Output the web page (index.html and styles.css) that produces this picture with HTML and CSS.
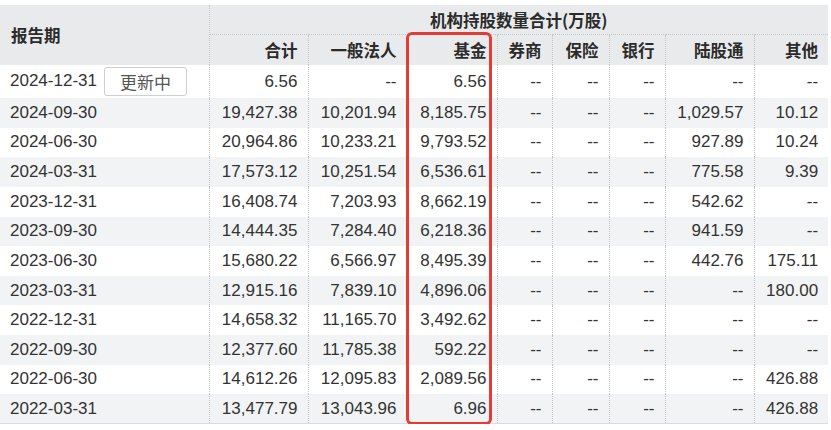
FILE: index.html
```html
<!DOCTYPE html>
<html lang="zh-CN">
<head>
<meta charset="utf-8">
<title>机构持股</title>
<link rel="stylesheet" href="styles.css">
</head>
<body>
<div class="wrap">
<table class="holdings">
  <colgroup>
    <col class="c-date"><col class="c-total"><col class="c-corp"><col class="c-fund"><col class="c-broker"><col class="c-ins"><col class="c-bank"><col class="c-hk"><col class="c-other">
  </colgroup>
  <thead>
    <tr class="h1">
      <th rowspan="2" class="date-h">报告期</th>
      <th colspan="8" class="group-h">机构持股数量合计(万股)</th>
    </tr>
    <tr class="h2">
      <th>合计</th><th>一般法人</th><th>基金</th><th>券商</th><th>保险</th><th>银行</th><th>陆股通</th><th class="last">其他</th>
    </tr>
  </thead>
  <tbody>
    <tr class="first"><td class="date">2024-12-31<span class="btn">更新中</span></td><td>6.56</td><td>--</td><td>6.56</td><td>--</td><td>--</td><td>--</td><td>--</td><td class="last">--</td></tr>
    <tr><td class="date">2024-09-30</td><td>19,427.38</td><td>10,201.94</td><td>8,185.75</td><td>--</td><td>--</td><td>--</td><td>1,029.57</td><td class="last">10.12</td></tr>
    <tr><td class="date">2024-06-30</td><td>20,964.86</td><td>10,233.21</td><td>9,793.52</td><td>--</td><td>--</td><td>--</td><td>927.89</td><td class="last">10.24</td></tr>
    <tr><td class="date">2024-03-31</td><td>17,573.12</td><td>10,251.54</td><td>6,536.61</td><td>--</td><td>--</td><td>--</td><td>775.58</td><td class="last">9.39</td></tr>
    <tr><td class="date">2023-12-31</td><td>16,408.74</td><td>7,203.93</td><td>8,662.19</td><td>--</td><td>--</td><td>--</td><td>542.62</td><td class="last">--</td></tr>
    <tr><td class="date">2023-09-30</td><td>14,444.35</td><td>7,284.40</td><td>6,218.36</td><td>--</td><td>--</td><td>--</td><td>941.59</td><td class="last">--</td></tr>
    <tr><td class="date">2023-06-30</td><td>15,680.22</td><td>6,566.97</td><td>8,495.39</td><td>--</td><td>--</td><td>--</td><td>442.76</td><td class="last">175.11</td></tr>
    <tr><td class="date">2023-03-31</td><td>12,915.16</td><td>7,839.10</td><td>4,896.06</td><td>--</td><td>--</td><td>--</td><td>--</td><td class="last">180.00</td></tr>
    <tr><td class="date">2022-12-31</td><td>14,658.32</td><td>11,165.70</td><td>3,492.62</td><td>--</td><td>--</td><td>--</td><td>--</td><td class="last">--</td></tr>
    <tr><td class="date">2022-09-30</td><td>12,377.60</td><td>11,785.38</td><td>592.22</td><td>--</td><td>--</td><td>--</td><td>--</td><td class="last">--</td></tr>
    <tr><td class="date">2022-06-30</td><td>14,612.26</td><td>12,095.83</td><td>2,089.56</td><td>--</td><td>--</td><td>--</td><td>--</td><td class="last">426.88</td></tr>
    <tr><td class="date">2022-03-31</td><td>13,477.79</td><td>13,043.96</td><td>6.96</td><td>--</td><td>--</td><td>--</td><td>--</td><td class="last">426.88</td></tr>
  </tbody>
</table>
<div class="highlight"></div>
</div>
</body>
</html>
```
FILE: styles.css
```css
html, body {
  margin: 0;
  padding: 0;
  background: #ffffff;
}
body {
  padding-top: 5px;
  font-family: "Liberation Sans", Arial, "Noto Sans CJK SC", sans-serif;
  color: #333333;
}
.wrap {
  position: relative;
  width: 831px;
}
.holdings {
  border-collapse: collapse;
  table-layout: fixed;
  width: 828px;
  font-size: 17px;
}
.c-date { width: 209px; }
.c-total { width: 99px; }
.c-corp { width: 99px; }
.c-fund { width: 90px; }
.c-broker { width: 55px; }
.c-ins { width: 57px; }
.c-bank { width: 56px; }
.c-hk { width: 89px; }
.c-other { width: 74px; }

.holdings th,
.holdings td {
  padding: 0 10px;
  white-space: nowrap;
  text-align: right;
  border-right: 1px dotted #c6c6c6;
  vertical-align: middle;
}
.holdings th.last,
.holdings td.last {
  border-right: none;
}
.holdings thead th {
  background: #e9eaec;
  font-family: "Noto Sans CJK SC", "Liberation Sans", sans-serif;
  font-weight: 700;
  color: #2b2b2b;
  font-size: 16.5px;
}
.h1 { height: 29.5px; }
.h2 { height: 30.5px; }
.holdings th.date-h {
  text-align: left;
  padding-left: 11px;
}
.holdings th.group-h {
  text-align: center;
  border-right: none;
  border-bottom: 1px dotted #c6c6c6;
}
.holdings tbody tr { height: 29.64px; }
.holdings tbody tr.first { height: 33px; }
.holdings tbody tr:nth-child(even) td { background: #f2f3f4; }
.holdings tbody tr:last-child td { border-bottom: 1px solid #dcdcdc; }
.holdings td.date {
  text-align: left;
}
.btn {
  display: inline-block;
  box-sizing: border-box;
  width: 83px;
  height: 29px;
  margin-left: 7px;
  border: 1px solid #cfcfcf;
  border-radius: 3px;
  background: #ffffff;
  color: #555555;
  font-family: "Noto Sans CJK SC", sans-serif;
  font-size: 17px;
  line-height: 27px;
  text-align: center;
  vertical-align: middle;
}
.highlight {
  position: absolute;
  left: 406px;
  top: 27px;
  width: 86px;
  height: 393px;
  box-sizing: border-box;
  border: 3px solid #e63a35;
  border-radius: 6px;
  pointer-events: none;
}
```
